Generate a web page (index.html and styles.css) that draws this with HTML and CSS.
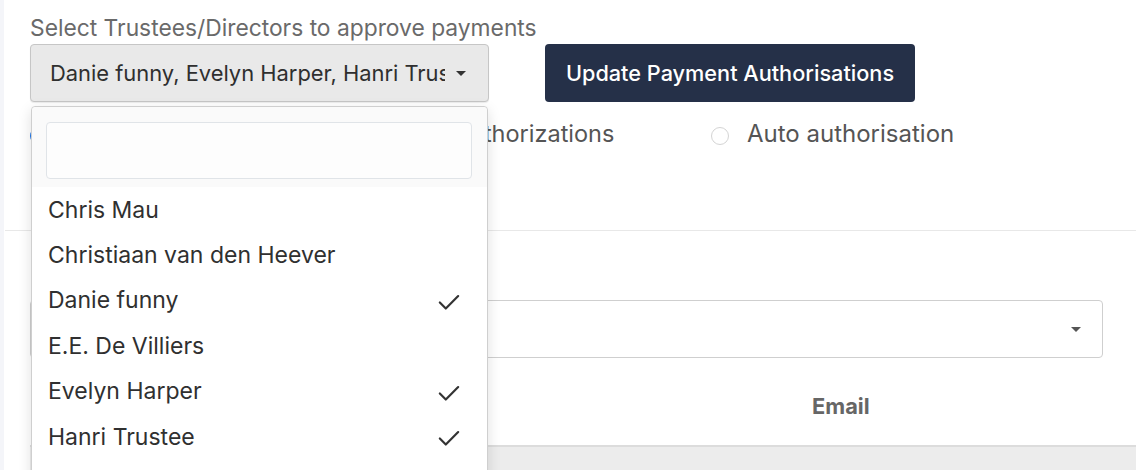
FILE: index.html
```html
<!DOCTYPE html>
<html>
<head>
<meta charset="utf-8">
<link rel="stylesheet" href="styles.css">
</head>
<body>
<div class="page">
  <div class="top">
    <div class="label">Select Trustees/Directors to approve payments</div>
    <div class="controls">
      <div class="picker">
        <button class="picker-btn">
          <span class="picker-text">Danie funny, Evelyn Harper, Hanri Trustee</span>
          <span class="caret"></span>
        </button>
        <div class="menu">
          <div class="menu-search"><div class="search-input"></div></div>
          <ul class="menu-list">
            <li class="item">Chris Mau</li>
            <li class="item">Christiaan van den Heever</li>
            <li class="item selected">Danie funny<svg class="check" viewBox="0 0 24 18" width="22" height="17"><path d="M2 9 L8.5 15.5 L22 2" fill="none" stroke="#333" stroke-width="2.4" stroke-linecap="round" stroke-linejoin="round"/></svg></li>
            <li class="item">E.E. De Villiers</li>
            <li class="item selected">Evelyn Harper<svg class="check" viewBox="0 0 24 18" width="22" height="17"><path d="M2 9 L8.5 15.5 L22 2" fill="none" stroke="#333" stroke-width="2.4" stroke-linecap="round" stroke-linejoin="round"/></svg></li>
            <li class="item selected">Hanri Trustee<svg class="check" viewBox="0 0 24 18" width="22" height="17"><path d="M2 9 L8.5 15.5 L22 2" fill="none" stroke="#333" stroke-width="2.4" stroke-linecap="round" stroke-linejoin="round"/></svg></li>
          </ul>
        </div>
      </div>
      <button class="primary">Update Payment Authorisations</button>
    </div>
    <div class="radios">
      <label class="radio"><span class="dot checked"></span><span class="rtext first">Require all the selected approvers' authorizations</span></label>
      <label class="radio"><span class="dot"></span><span class="rtext">Auto authorisation</span></label>
    </div>
  </div>
  <div class="section">
    <div class="sec-label"></div>
    <div class="select-box"><span class="caret"></span></div>
    <div class="table-wrap">
      <table class="grid">
        <thead>
          <tr><th class="c-name"></th><th class="c-email">Email</th></tr>
        </thead>
        <tbody>
          <tr class="shade"><td></td><td class="c-email">danie@trust.co.za</td></tr>
        </tbody>
      </table>
    </div>
  </div>
</div>
</body>
</html>
```
FILE: styles.css
```css
* { box-sizing: border-box; }
html, body { margin: 0; padding: 0; }
body {
  font-family: Inter, "Noto Sans", sans-serif;
  background: #fff;
  color: #333;
  overflow: hidden;
  height: 470px;
}
.page {
  border-left: 4px solid #f4f5f9;
  min-height: 470px;
}
.top {
  padding: 14px 0 0 25px;
  height: 231px;
  border-bottom: 1px solid #e8e8e8;
  margin-left: 1px;
}
.label {
  font-size: 22.8px;
  line-height: 27px;
  color: #6a6a6a;
  margin-bottom: 3px;
}
.controls {
  display: flex;
  gap: 56px;
  align-items: flex-start;
}
.picker { position: relative; }
.picker-btn {
  width: 459px;
  height: 58px;
  background: #e9e9e9;
  border: 1px solid #c6c6c6;
  border-radius: 4px;
  display: flex;
  align-items: center;
  padding: 0 22px 0 19px;
  font: inherit;
  font-size: 21.9px;
  color: #2f2f2f;
  box-shadow: 0 1px 1px rgba(0,0,0,0.08);
}
.picker-text {
  flex: 1;
  overflow: hidden;
  white-space: nowrap;
  text-align: left;
}
.caret {
  width: 0; height: 0;
  border-left: 5.5px solid transparent;
  border-right: 5.5px solid transparent;
  border-top: 5.5px solid #333;
  margin-left: 11px;
}
.menu {
  position: absolute;
  left: 1px;
  top: 62px;
  width: 457px;
  height: 400px;
  background: #fff;
  border: 1px solid #cfcfcf;
  border-radius: 4px;
  box-shadow: 0 4px 14px rgba(0,0,0,0.13);
  z-index: 10;
}
.menu-search {
  background: #fafafa;
  padding: 15px 15px 8px 14px;
  border-radius: 4px 4px 0 0;
}
.search-input {
  height: 57px;
  border: 1px solid #e0e4e8;
  border-radius: 4px;
  background: #fdfdfd;
}
.menu-list {
  list-style: none;
  margin: 0;
  padding: 0;
}
.item {
  display: flex;
  align-items: center;
  justify-content: space-between;
  height: 45.4px;
  padding: 0 27px 0 16px;
  font-size: 23px;
  color: #303030;
}
.check { display: block; margin-top: 4px; }
.primary {
  height: 58px;
  width: 370px;
  background: #253048;
  color: #fff;
  border: none;
  border-radius: 4px;
  font: inherit;
  font-size: 21.7px;
  font-weight: 500;
  padding: 0;
}
.radios {
  display: flex;
  align-items: center;
  margin-top: 17px;
}
.radio {
  display: flex;
  align-items: center;
  font-size: 23.5px;
  color: #555;
}
.radio:last-child { font-size: 24px; }
.dot {
  flex: none;
  width: 18px; height: 18px;
  border: 1px solid #d4d4d4;
  border-radius: 50%;
  margin-top: 5px;
  background: #fff;
}
.dot.checked {
  border: 5px solid #1a73e8;
}
.rtext { margin-left: 18px; white-space: nowrap; }
.rtext.first { width: 645px; }
.section {
  padding: 24px 33px 0 26px;
}
.sec-label {
  height: 26px;
  margin-bottom: 19px;
}
.select-box {
  height: 58px;
  border: 1px solid #cfcfcf;
  border-radius: 4px;
  display: flex;
  align-items: center;
  justify-content: flex-end;
  padding-right: 21px;
}
.select-box .caret { border-top-color: #555; }
.table-wrap {
  margin-right: -33px;
  margin-top: 30px;
}
.grid {
  width: 100%;
  border-collapse: collapse;
}
.grid th {
  font-size: 21.8px;
  font-weight: 700;
  color: #666;
  height: 58px;
  padding-bottom: 22px;
  text-align: left;
  border-bottom: 2px solid #dcdcdc;
}
.grid th.c-email { padding-left: 0; }
.c-name { width: 782px; }
.grid td {
  background: #ececec;
  height: 50px;
  font-size: 21px;
  color: #555;
  padding-top: 20px;
  vertical-align: top;
}
```
